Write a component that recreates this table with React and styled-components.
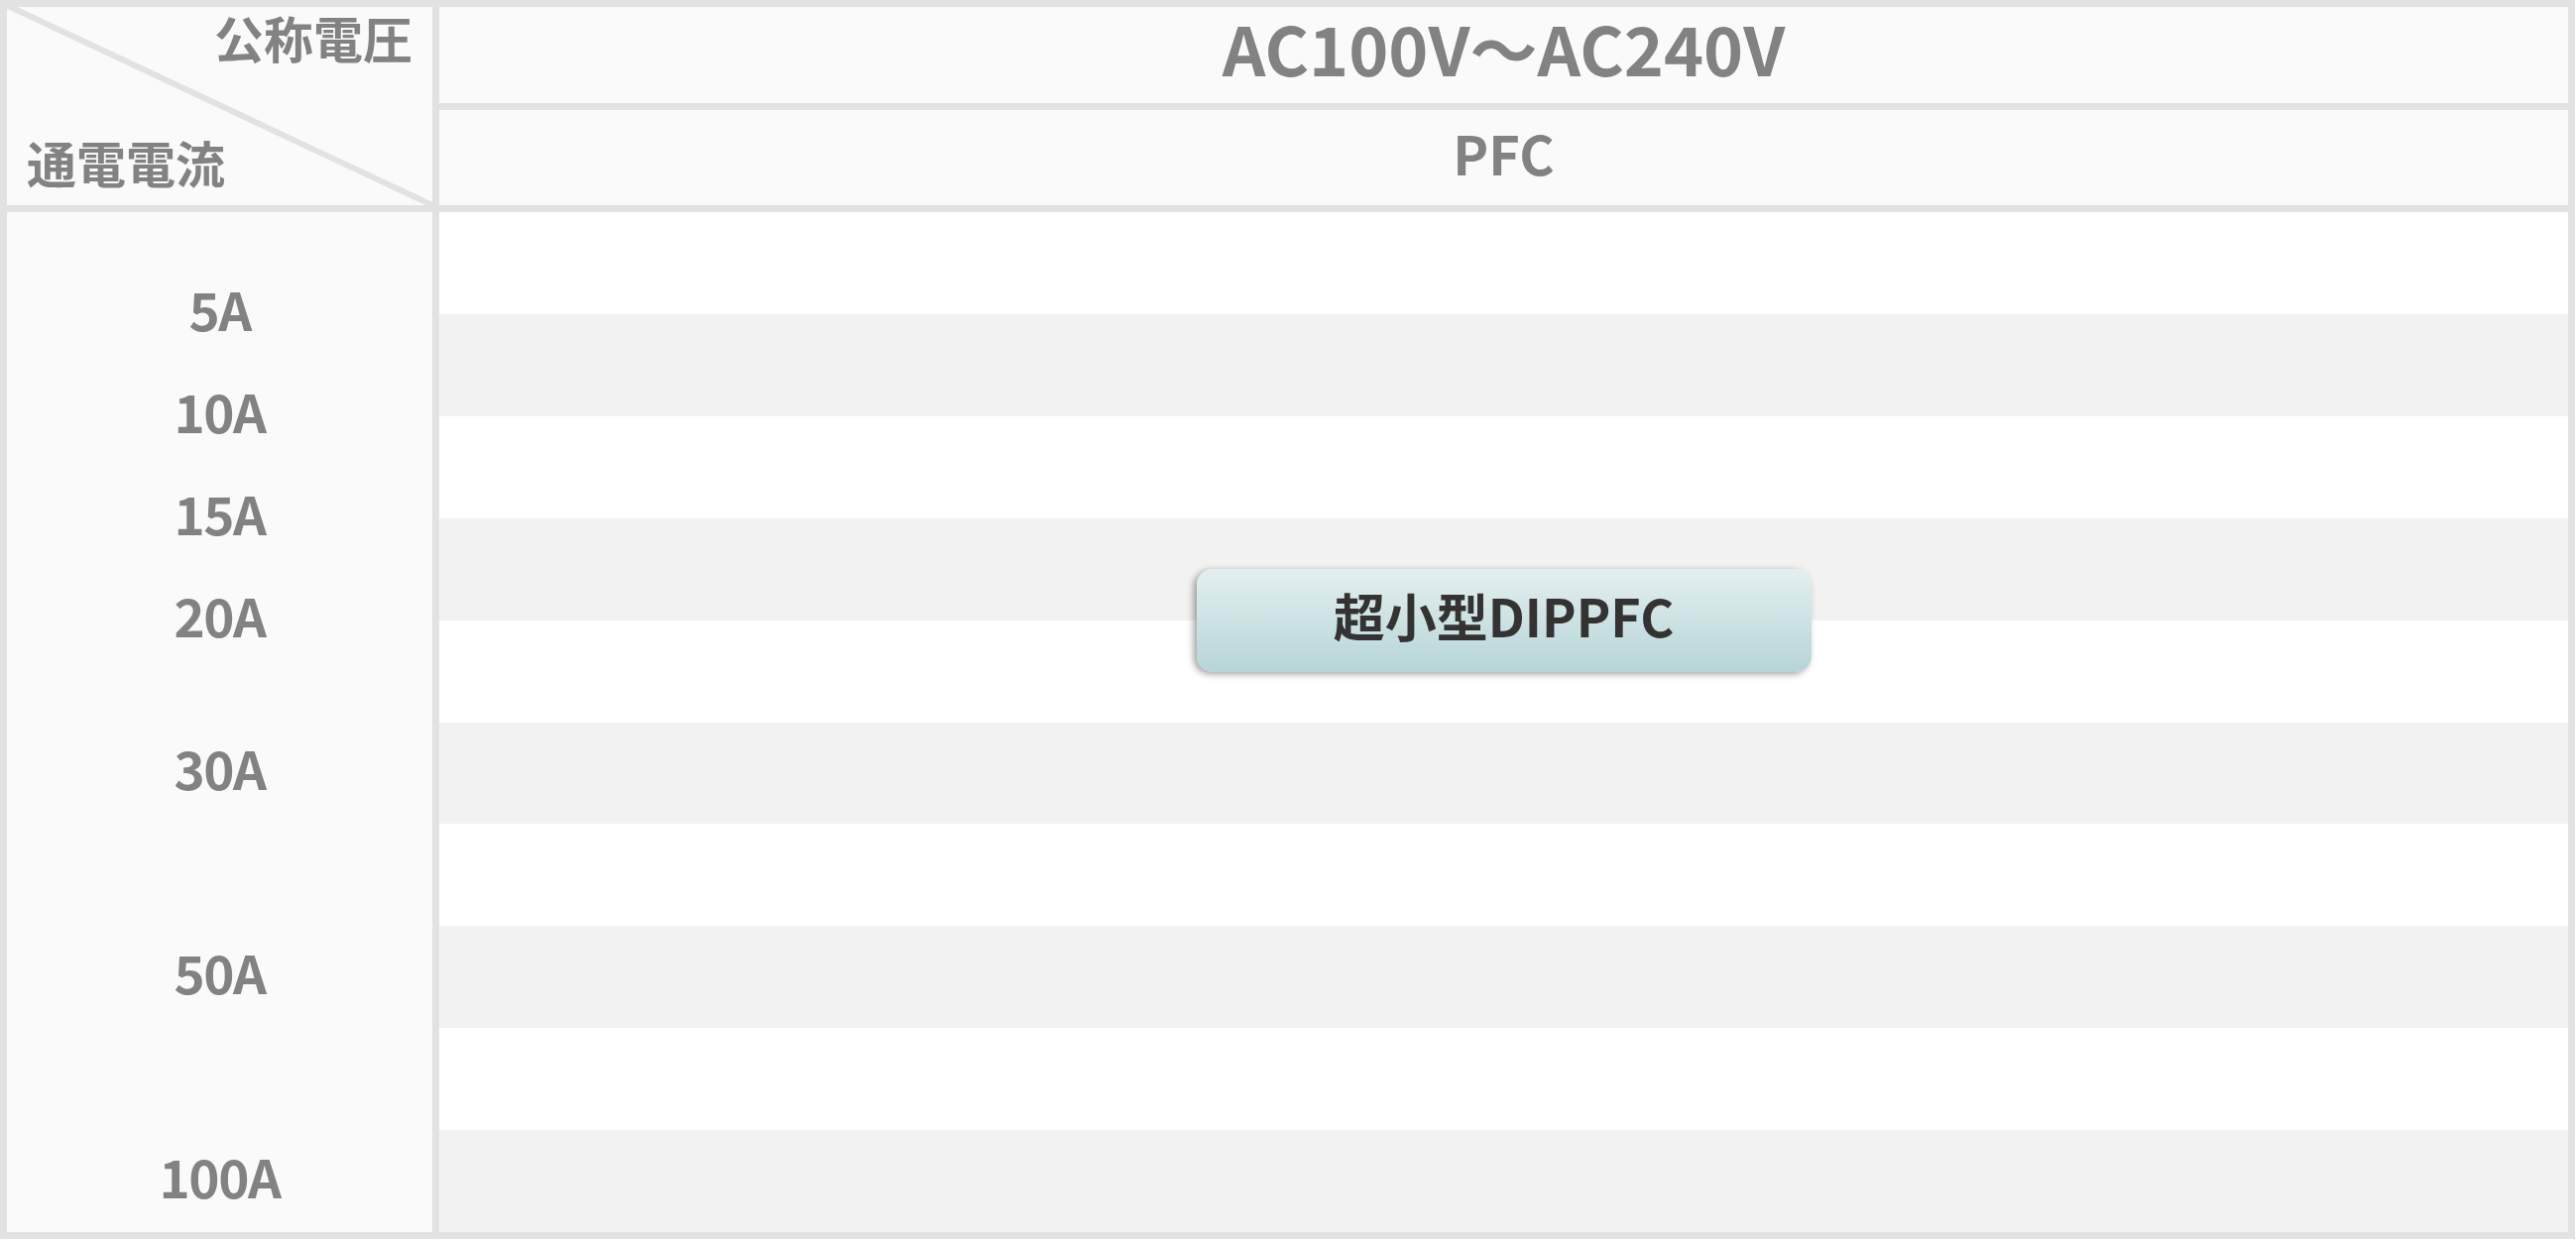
import React from "react";
import styled, { createGlobalStyle } from "styled-components";

const GlobalStyle = createGlobalStyle`
  html, body { margin: 0; padding: 0; background: #ffffff; }
  body { font-family: "Noto Sans CJK JP", "Noto Sans", sans-serif; }
`;

const Table = styled.div`
  box-sizing: border-box;
  width: 2597px;
  height: 1250px;
  padding: 7px;
  background: #e2e2e2;
  display: grid;
  grid-template-columns: 429px 1fr;
  grid-template-rows: 97px 96px 1fr;
  gap: 7px;
  color: #828282;
  font-family: "Noto Sans CJK JP", "Noto Sans", sans-serif;
  font-weight: 700;
`;

const Corner = styled.div`
  grid-row: 1 / span 2;
  grid-column: 1;
  position: relative;
  background: #fafafa;
  display: flex;
  flex-direction: column;
  justify-content: space-between;
  padding: 0px 20px 14px 20px;
  font-size: 50px;
  line-height: 60px;
`;

const Diagonal = styled.svg`
  position: absolute;
  left: -7px;
  top: -7px;
  width: calc(100% + 7px);
  height: calc(100% + 7px);
  pointer-events: none;
`;

const CornerTop = styled.div`
  text-align: right;
  position: relative;
`;

const CornerBottom = styled.div`
  text-align: left;
  position: relative;
`;

const HeadCell = styled.div`
  grid-column: 2;
  background: #fafafa;
  display: flex;
  align-items: center;
  justify-content: center;
  font-size: ${(p) => p.$size}px;
  line-height: 1;
  padding-bottom: ${(p) => p.$lift || 0}px;
`;

const LabelColumn = styled.div`
  grid-row: 3;
  grid-column: 1;
  background: #fafafa;
  display: grid;
  grid-template-rows: repeat(10, 1fr);
  font-size: 53px;
  letter-spacing: -1.5px;
  line-height: 1;
`;

const Label = styled.div`
  grid-column: 1;
  grid-row: ${(p) => p.$row};
  display: flex;
  align-items: center;
  justify-content: center;
  padding-bottom: 11px;
`;

const Body = styled.div`
  grid-row: 3;
  grid-column: 2;
  display: grid;
  grid-template-rows: repeat(10, 1fr);
`;

const Stripe = styled.div`
  grid-column: 1;
  grid-row: ${(p) => p.$row};
  background: ${(p) => (p.$alt ? "#f2f2f2" : "#ffffff")};
`;

const Product = styled.div`
  grid-column: 1;
  grid-row: ${(p) => p.$row};
  justify-self: center;
  align-self: center;
  box-sizing: border-box;
  width: 620px;
  height: 104px;
  border-radius: 16px;
  background: linear-gradient(to bottom, #e4efef 0%, #b6d5d6 100%);
  box-shadow: -3px 2px 7px rgba(0, 0, 0, 0.38);
  display: flex;
  align-items: center;
  justify-content: center;
  color: #333333;
  font-size: 52px;
  font-weight: 700;
  line-height: 1;
  padding-bottom: 10px;
`;

const labels = [
  { text: "5A", row: "1 / span 2" },
  { text: "10A", row: "2 / span 2" },
  { text: "15A", row: "3 / span 2" },
  { text: "20A", row: "4 / span 2" },
  { text: "30A", row: "6" },
  { text: "50A", row: "8" },
  { text: "100A", row: "10" },
];

export default function App() {
  return (
    <>
      <GlobalStyle />
      <Table>
        <Corner>
          <Diagonal viewBox="0 0 436 207" preserveAspectRatio="none">
            <line x1="4" y1="4" x2="436" y2="207" stroke="#e2e2e2" strokeWidth="6" />
          </Diagonal>
          <CornerTop>公称電圧</CornerTop>
          <CornerBottom>通電電流</CornerBottom>
        </Corner>
        <HeadCell $size={68} $lift={16}>AC100V～AC240V</HeadCell>
        <HeadCell $size={54} $lift={10}>PFC</HeadCell>
        <LabelColumn>
          {labels.map((l) => (
            <Label key={l.text} $row={l.row}>
              {l.text}
            </Label>
          ))}
        </LabelColumn>
        <Body>
          {Array.from({ length: 10 }, (_, i) => (
            <Stripe key={i} $row={i + 1} $alt={i % 2 === 1} />
          ))}
          <Product $row="4 / span 2">超小型DIPPFC</Product>
        </Body>
      </Table>
    </>
  );
}
